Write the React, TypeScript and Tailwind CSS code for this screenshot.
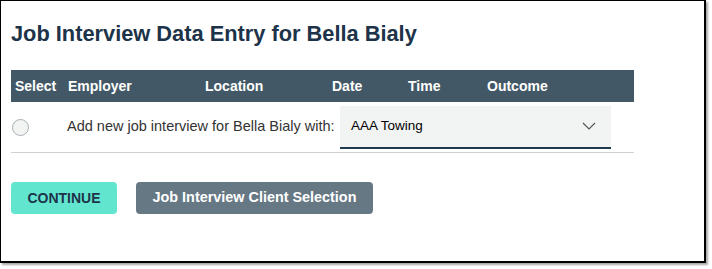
import React from 'react';

const columns = [
  { label: 'Select', w: 'w-[53px]' },
  { label: 'Employer', w: 'w-[137px]' },
  { label: 'Location', w: 'w-[127px]' },
  { label: 'Date', w: 'w-[76px]' },
  { label: 'Time', w: 'w-[79px]' },
  { label: 'Outcome', w: 'flex-1' },
];

const App: React.FC = () => {
  return (
    <div className="w-[712px] h-[269px] bg-white font-['Liberation_Sans',Arial,sans-serif]">
      {/* Framed panel */}
      <div className="w-[706px] h-[263px] border border-black border-r-2 border-b-2 shadow-[2px_2px_2px_rgba(0,0,0,0.35)] pl-[10px] pt-[20px]">
        <h1 className="text-[21.8px] leading-[26px] font-bold text-[#1d3349]">
          Job Interview Data Entry for Bella Bialy
        </h1>

        <div className="w-[623px] mt-[23px]">
          {/* Table header */}
          <div className="flex h-[32px] items-center bg-[#425866] text-white text-[14px] font-bold">
            {columns.map((c) => (
              <div key={c.label} className={`${c.w} pl-[4px]`}>
                {c.label}
              </div>
            ))}
          </div>

          {/* Entry row */}
          <div className="flex items-center h-[51px] border-b border-[#cdd2d4]">
            <div className="w-[53px] flex items-center pl-[1px]">
              <span className="w-[17px] h-[17px] rounded-full border border-[#a9b0b4] bg-[#f2f4f4]" />
            </div>
            <div className="w-[276px] whitespace-nowrap text-[14.5px] text-[#333] pl-[3px]">
              Add new job interview for Bella Bialy with:
            </div>
            <div className="w-[271px] h-[43px] bg-[#f2f4f4] border-b-2 border-[#1f3a4d] flex items-center justify-between pl-[11px] pr-[15px] text-[13.5px] text-black">
              <span>AAA Towing</span>
              <svg width="14" height="8" viewBox="0 0 14 8" fill="none">
                <path d="M1 1l6 6 6-6" stroke="#555" strokeWidth="1.2" />
              </svg>
            </div>
          </div>
        </div>

        {/* Actions */}
        <div className="flex gap-[19px] mt-[29px]">
          <button className="w-[106px] h-[32px] rounded-[4px] bg-[#62e5cf] text-[#1d3349] text-[14px] font-bold">
            CONTINUE
          </button>
          <button className="w-[237px] h-[32px] rounded-[4px] bg-[#667884] text-white text-[14.4px] font-bold">
            Job Interview Client Selection
          </button>
        </div>
      </div>
    </div>
  );
};

export default App;
